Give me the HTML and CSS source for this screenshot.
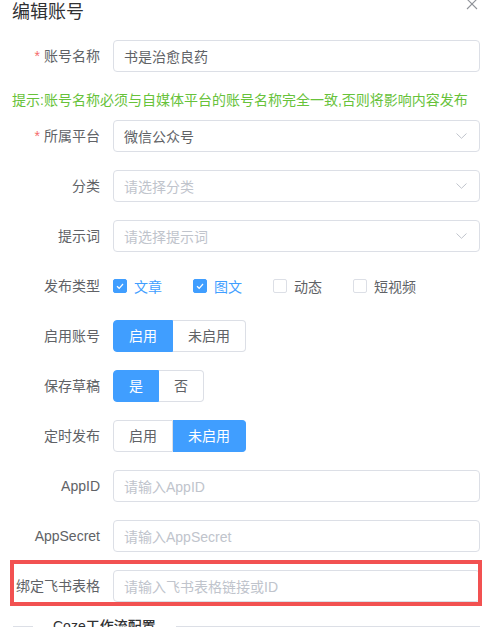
FILE: index.html
```html
<!DOCTYPE html>
<html lang="zh-CN">
<head>
<meta charset="utf-8">
<title>编辑账号</title>
<link rel="stylesheet" href="styles.css">
</head>
<body>
<div class="dialog">
  <div class="header">
    <span class="title">编辑账号</span>
    <svg class="close" width="12" height="12" viewBox="0 0 12 12"><path d="M1 1 L11 11 M11 1 L1 11" stroke="#909399" stroke-width="1.1" fill="none"/></svg>
  </div>
  <div class="form">
    <div class="row">
      <label class="label"><span class="req">*</span>账号名称</label>
      <div class="input"><span class="value">书是治愈良药</span></div>
    </div>
    <div class="hint">提示:账号名称必须与自媒体平台的账号名称完全一致,否则将影响内容发布</div>
    <div class="row">
      <label class="label"><span class="req">*</span>所属平台</label>
      <div class="input select"><span class="value">微信公众号</span><svg class="arrow" width="11" height="6" viewBox="0 0 11 6"><path d="M0.5 0.5 L5.5 5.3 L10.5 0.5" stroke="#c0c4cc" stroke-width="1" fill="none"/></svg></div>
    </div>
    <div class="row">
      <label class="label">分类</label>
      <div class="input select"><span class="ph">请选择分类</span><svg class="arrow" width="11" height="6" viewBox="0 0 11 6"><path d="M0.5 0.5 L5.5 5.3 L10.5 0.5" stroke="#c0c4cc" stroke-width="1" fill="none"/></svg></div>
    </div>
    <div class="row">
      <label class="label">提示词</label>
      <div class="input select"><span class="ph">请选择提示词</span><svg class="arrow" width="11" height="6" viewBox="0 0 11 6"><path d="M0.5 0.5 L5.5 5.3 L10.5 0.5" stroke="#c0c4cc" stroke-width="1" fill="none"/></svg></div>
    </div>
    <div class="row">
      <label class="label">发布类型</label>
      <div class="checks">
        <span class="check on"><span class="box"><svg width="14" height="14" viewBox="0 0 14 14"><path d="M4 7.2 L6.2 9.3 L10 5" stroke="#fff" stroke-width="1.2" fill="none"/></svg></span><span class="ctext">文章</span></span>
        <span class="check on"><span class="box"><svg width="14" height="14" viewBox="0 0 14 14"><path d="M4 7.2 L6.2 9.3 L10 5" stroke="#fff" stroke-width="1.2" fill="none"/></svg></span><span class="ctext">图文</span></span>
        <span class="check"><span class="box"></span><span class="ctext">动态</span></span>
        <span class="check"><span class="box"></span><span class="ctext">短视频</span></span>
      </div>
    </div>
    <div class="row">
      <label class="label">启用账号</label>
      <div class="group">
        <span class="rbtn active">启用</span><span class="rbtn">未启用</span>
      </div>
    </div>
    <div class="row">
      <label class="label">保存草稿</label>
      <div class="group">
        <span class="rbtn active">是</span><span class="rbtn">否</span>
      </div>
    </div>
    <div class="row">
      <label class="label">定时发布</label>
      <div class="group">
        <span class="rbtn">启用</span><span class="rbtn active">未启用</span>
      </div>
    </div>
    <div class="row">
      <label class="label">AppID</label>
      <div class="input"><span class="ph">请输入AppID</span></div>
    </div>
    <div class="row">
      <label class="label">AppSecret</label>
      <div class="input"><span class="ph">请输入AppSecret</span></div>
    </div>
    <div class="row marked">
      <label class="label">绑定飞书表格</label>
      <div class="input"><span class="ph">请输入飞书表格链接或ID</span></div>
      <div class="mark"></div>
    </div>
    <div class="divider"><span class="dtext">Coze工作流配置</span></div>
  </div>
</div>
</body>
</html>
```
FILE: styles.css
```css
html, body {
  margin: 0;
  padding: 0;
  overflow: hidden;
  background: #fff;
}
body {
  font-family: "Liberation Sans", "Noto Sans CJK SC", sans-serif;
  font-size: 14px;
  color: #606266;
}
.dialog {
  padding: 0 5px 40px 12px;
}
.header {
  display: flex;
  justify-content: space-between;
  align-items: flex-start;
  height: 24px;
}
.title {
  font-size: 18px;
  line-height: 24px;
  color: #303133;
}
.close {
  margin-top: -2px;
  margin-right: 2px;
}
.form {
  margin-top: 16px;
}
.row {
  display: flex;
  align-items: center;
  height: 32px;
  margin-bottom: 18px;
  position: relative;
}
.label {
  flex: 0 0 101px;
  box-sizing: border-box;
  padding-right: 13px;
  text-align: right;
  line-height: 32px;
  color: #606266;
  white-space: nowrap;
}
.req {
  color: #f56c6c;
  margin-right: 4px;
}
.input {
  flex: 1;
  height: 32px;
  box-sizing: border-box;
  border: 1px solid #dcdfe6;
  border-radius: 4px;
  padding: 0 12px 0 10px;
  display: flex;
  align-items: center;
  justify-content: space-between;
  background: #fff;
}
.value {
  color: #606266;
}
.ph {
  color: #c0c4cc;
}
.arrow {
  display: block;
}
.hint {
  color: #67c23a;
  line-height: 20px;
  margin-top: -18px;
  padding-top: 18px;
  margin-bottom: 10px;
  white-space: nowrap;
}
.checks {
  display: flex;
  align-items: center;
}
.check {
  display: flex;
  align-items: center;
  width: 80px;
}
.box {
  width: 14px;
  height: 14px;
  box-sizing: border-box;
  border: 1px solid #dcdfe6;
  border-radius: 2px;
  background: #fff;
  position: relative;
}
.box svg {
  position: absolute;
  left: -1px;
  top: -1px;
}
.check.on .box {
  background: #409eff;
  border-color: #409eff;
}
.ctext {
  padding-left: 7px;
  color: #606266;
}
.check.on .ctext {
  color: #409eff;
}
.group {
  display: flex;
}
.rbtn {
  height: 32px;
  box-sizing: border-box;
  line-height: 30px;
  padding: 0 15px;
  border: 1px solid #dcdfe6;
  background: #fff;
  color: #606266;
}
.rbtn + .rbtn {
  border-left: none;
}
.rbtn:first-child {
  border-radius: 4px 0 0 4px;
}
.rbtn:last-child {
  border-radius: 0 4px 4px 0;
}
.rbtn.active {
  background: #409eff;
  border-color: #409eff;
  color: #fff;
}
.mark {
  position: absolute;
  left: -2px;
  top: -10px;
  width: 472px;
  height: 46px;
  box-sizing: border-box;
  border: 4px solid #f25151;
}
.divider {
  position: relative;
  height: 1px;
  background: #dcdfe6;
  margin: 24px 0 0 1px;
}
.dtext {
  position: absolute;
  left: 20px;
  top: 0;
  transform: translateY(-50%);
  background: #fff;
  padding: 0 20px;
  color: #303133;
  font-weight: 500;
  line-height: 20px;
  white-space: nowrap;
}
```
